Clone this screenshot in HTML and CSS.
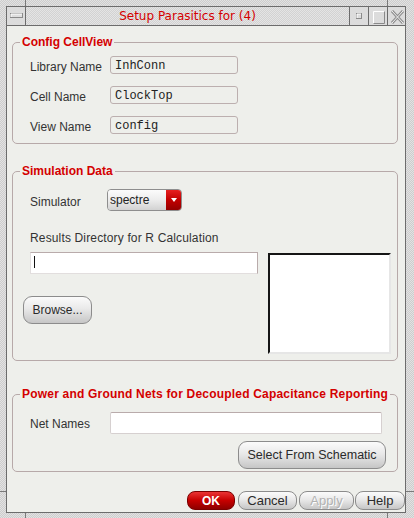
FILE: index.html
```html
<!DOCTYPE html>
<html>
<head>
<meta charset="utf-8">
<link rel="stylesheet" href="styles.css">
</head>
<body>
<div class="window">
  <div class="inner">
    <div class="titlebar">
      <div class="tb-btn tb-menu">
        <svg width="18" height="18" viewBox="0 0 18 18"><rect x="3.5" y="6.5" width="12" height="4" fill="#dedede" stroke="#8a8a8a"/><path d="M4 10V7h11" fill="none" stroke="#fff"/></svg>
      </div>
      <div class="title">Setup Parasitics for (4)</div>
      <div class="tb-btn tb-r">
        <svg width="18" height="18" viewBox="0 0 18 18"><rect x="6.5" y="6.5" width="5" height="5" fill="#dcdcdc" stroke="#8a8a8a"/><path d="M7 11V7h4" fill="none" stroke="#fff"/></svg>
      </div>
      <div class="tb-btn tb-r">
        <svg width="18" height="18" viewBox="0 0 18 18"><path d="M4.5 16.5V4.5h11" fill="none" stroke="#fff"/><path d="M4.5 16.5h11V4.5" fill="none" stroke="#8a8a8a"/></svg>
      </div>
      <div class="tb-btn tb-r tb-close">
        <svg width="17" height="18" viewBox="0 0 17 18"><path d="M4 4L15 16M15 4L4 16" stroke="#8e8e8e" stroke-width="3"/><path d="M4 4L15 16M15 4L4 16" stroke="#f2f2f2" stroke-width="1"/></svg>
      </div>
    </div>
    <div class="content">
      <fieldset class="group g1">
        <legend>Config CellView</legend>
        <div class="gbody g1-body">
          <div class="row"><span class="lbl">Library Name</span><div class="ro-field">InhConn</div></div>
          <div class="row"><span class="lbl">Cell Name</span><div class="ro-field">ClockTop</div></div>
          <div class="row"><span class="lbl">View Name</span><div class="ro-field">config</div></div>
        </div>
      </fieldset>

      <fieldset class="group g2">
        <legend>Simulation Data</legend>
        <div class="gbody g2-body">
          <div class="sim-row">
            <span class="lbl sim-lbl">Simulator</span>
            <div class="dropdown"><span class="dd-text">spectre</span><span class="dd-arrow"><span class="tri"></span></span></div>
          </div>
          <div class="res-lbl">Results Directory for R Calculation</div>
          <div class="res-row">
            <div class="res-left">
              <div class="text-in"><span class="caret"></span></div>
              <div class="btn browse">Browse...</div>
            </div>
            <div class="listbox"></div>
          </div>
        </div>
      </fieldset>

      <fieldset class="group g3">
        <legend>Power and Ground Nets for Decoupled Capacitance Reporting</legend>
        <div class="gbody g3-body">
          <div class="net-row"><span class="lbl net-lbl">Net Names</span><div class="net-in"></div></div>
          <div class="btn select-btn">Select From Schematic</div>
        </div>
      </fieldset>

      <div class="actions">
        <div class="btn small ok">OK</div>
        <div class="btn small cancel">Cancel</div>
        <div class="btn small apply">Apply</div>
        <div class="btn small help">Help</div>
      </div>
    </div>
  </div>
</div>
</body>
</html>
```
FILE: styles.css
```css
body {
  margin: 0;
  font-family: "Liberation Sans", Arial, sans-serif;
  font-size: 12px;
  background: #d6d6d6;
}

.window {
  width: 414px;
  height: 518px;
  box-sizing: border-box;
  padding: 6px 8px 5px 6px;
  background:
    linear-gradient(#7a7a7a, #7a7a7a) 25px 0 / 1px 6px no-repeat,
    linear-gradient(#7a7a7a, #7a7a7a) 387px 0 / 1px 6px no-repeat,
    linear-gradient(#7a7a7a, #7a7a7a) 25px 513px / 1px 5px no-repeat,
    linear-gradient(#7a7a7a, #7a7a7a) 387px 513px / 1px 5px no-repeat,
    linear-gradient(#7a7a7a, #7a7a7a) 0 491px / 6px 1px no-repeat,
    linear-gradient(#7a7a7a, #7a7a7a) 406px 491px / 8px 1px no-repeat,
    repeating-conic-gradient(#cdcdcd 0 25%, #e2e2e2 0 50%) 0 0 / 2px 2px;
}

.inner {
  height: 100%;
  box-sizing: border-box;
  border: 1px solid #6c6c6c;
  display: flex;
  flex-direction: column;
  background: #eeefeb;
}

.titlebar {
  height: 18px;
  flex: none;
  border-bottom: 1px solid #6c6c6c;
  display: flex;
  background: repeating-conic-gradient(#d2d2d2 0 25%, #e4e4e4 0 50%) 0 0 / 2px 2px;
}

.tb-btn {
  width: 18px;
  height: 18px;
  flex: none;
  background: #dcdcdc;
}

.tb-btn svg { display: block; }

.tb-menu { border-right: 1px solid #6c6c6c; }
.tb-r { border-left: 1px solid #6c6c6c; }
.tb-close { width: 17px; }

.title {
  flex: 1;
  text-align: center;
  color: #d40000;
  font-family: "DejaVu Sans", sans-serif;
  font-size: 12px;
  line-height: 18px;
}

.content {
  flex: 1;
  display: flex;
  flex-direction: column;
}

.group {
  margin: 20px 7px 0 5px;
  padding: 0;
  border: 1px solid #b7a9a9;
  border-radius: 5px;
  min-width: 0;
}

.g1 { margin-top: 9px; }
.g3 { margin-top: 26px; }

.group legend {
  margin-left: 7px;
  padding: 0 2px;
  font-weight: bold;
  font-size: 12px;
  line-height: 14px;
  color: #d40000;
}

.g3 legend { letter-spacing: 0.2px; }

.lbl {
  color: #333;
  line-height: 14px;
  flex: none;
}

/* group 1 */
.g1-body {
  padding: 7px 0 9px 17px;
  display: flex;
  flex-direction: column;
  gap: 12px;
}

.row {
  display: flex;
  align-items: flex-start;
  height: 18px;
}

.row .lbl {
  width: 80px;
  padding-top: 4px;
}

.ro-field {
  width: 128px;
  height: 18px;
  box-sizing: border-box;
  border: 1px solid #bcafaf;
  border-radius: 3px;
  padding: 2px 4px 0;
  font-family: "Liberation Mono", monospace;
  font-size: 12px;
  line-height: 14px;
  color: #222;
}

/* group 2 */
.g2-body {
  padding: 11px 0 6px 10px;
}

.sim-row {
  display: flex;
  height: 22px;
  margin-left: 7px;
}

.sim-lbl {
  width: 77px;
  padding-top: 6px;
}

.dropdown {
  width: 75px;
  height: 22px;
  box-sizing: border-box;
  border: 1px solid #8e8e8e;
  border-radius: 4px;
  display: flex;
  overflow: hidden;
}

.dd-text {
  flex: 1;
  padding-left: 2px;
  line-height: 20px;
  color: #222;
  background: linear-gradient(#fbfbfb, #ececec 50%, #d2d2d2);
}

.dd-arrow {
  width: 15px;
  display: flex;
  align-items: center;
  justify-content: center;
  background: linear-gradient(#e62020, #c20000 50%, #940000);
}

.tri {
  width: 0;
  height: 0;
  border-left: 3px solid transparent;
  border-right: 3px solid transparent;
  border-top: 4px solid #fff;
}

.res-lbl {
  margin: 20px 0 0 7px;
  line-height: 14px;
  color: #333;
  letter-spacing: 0.15px;
}

.res-row {
  display: flex;
  margin-top: 7px;
}

.res-left {
  width: 235px;
  display: flex;
  flex-direction: column;
  align-items: flex-start;
}

.text-in {
  margin-left: 7px;
  width: 228px;
  height: 22px;
  box-sizing: border-box;
  background: #fff;
  border: 1px solid #e2dede;
  border-top-color: #b9abab;
  border-right-color: #b9abab;
  padding: 3px 0 0 3px;
}

.caret {
  display: block;
  width: 1px;
  height: 12px;
  background: #111;
}

.btn {
  box-sizing: border-box;
  border: 1px solid #8c8c8c;
  border-radius: 9px;
  background: linear-gradient(#fbfbfb, #e9e9e9 45%, #c6c6c6);
  color: #2a2a2a;
  display: flex;
  align-items: center;
  justify-content: center;
  flex: none;
}

.browse {
  margin-top: 22px;
  width: 69px;
  height: 28px;
  font-size: 12px;
}

.listbox {
  margin: 1px 0 0 10px;
  width: 123px;
  height: 101px;
  box-sizing: border-box;
  background: #fff;
  border: 2px solid;
  border-color: #151515 #e6e6e6 #e6e6e6 #151515;
}

/* group 3 */
.g3-body {
  padding: 11px 11px 2px 17px;
  display: flex;
  flex-direction: column;
}

.net-row {
  display: flex;
  align-items: flex-start;
  height: 22px;
}

.net-lbl {
  width: 80px;
  padding-top: 5px;
}

.net-in {
  width: 272px;
  height: 22px;
  box-sizing: border-box;
  background: #fff;
  border: 1px solid #d6d0d0;
  border-top-color: #b9abab;
  border-radius: 2px;
}

.select-btn {
  align-self: flex-end;
  margin-top: 7px;
  width: 148px;
  height: 28px;
  font-size: 12.5px;
}

/* actions */
.actions {
  display: flex;
  justify-content: flex-end;
  margin-top: 19px;
}

.small {
  height: 19px;
  border-radius: 8px;
  font-size: 13px;
}

.ok {
  width: 48px;
  background: linear-gradient(#ea3434, #c60000 50%, #8e0000);
  border-color: #7a0000;
  color: #fff;
  font-weight: bold;
  font-size: 12px;
}

.cancel { width: 59px; margin-left: 3px; }
.apply {
  width: 55px;
  margin-left: 2px;
  color: #b2b2b2;
  text-shadow: 1px 1px 0 #fff;
}
.help { width: 50px; margin-left: 1px; }
```
